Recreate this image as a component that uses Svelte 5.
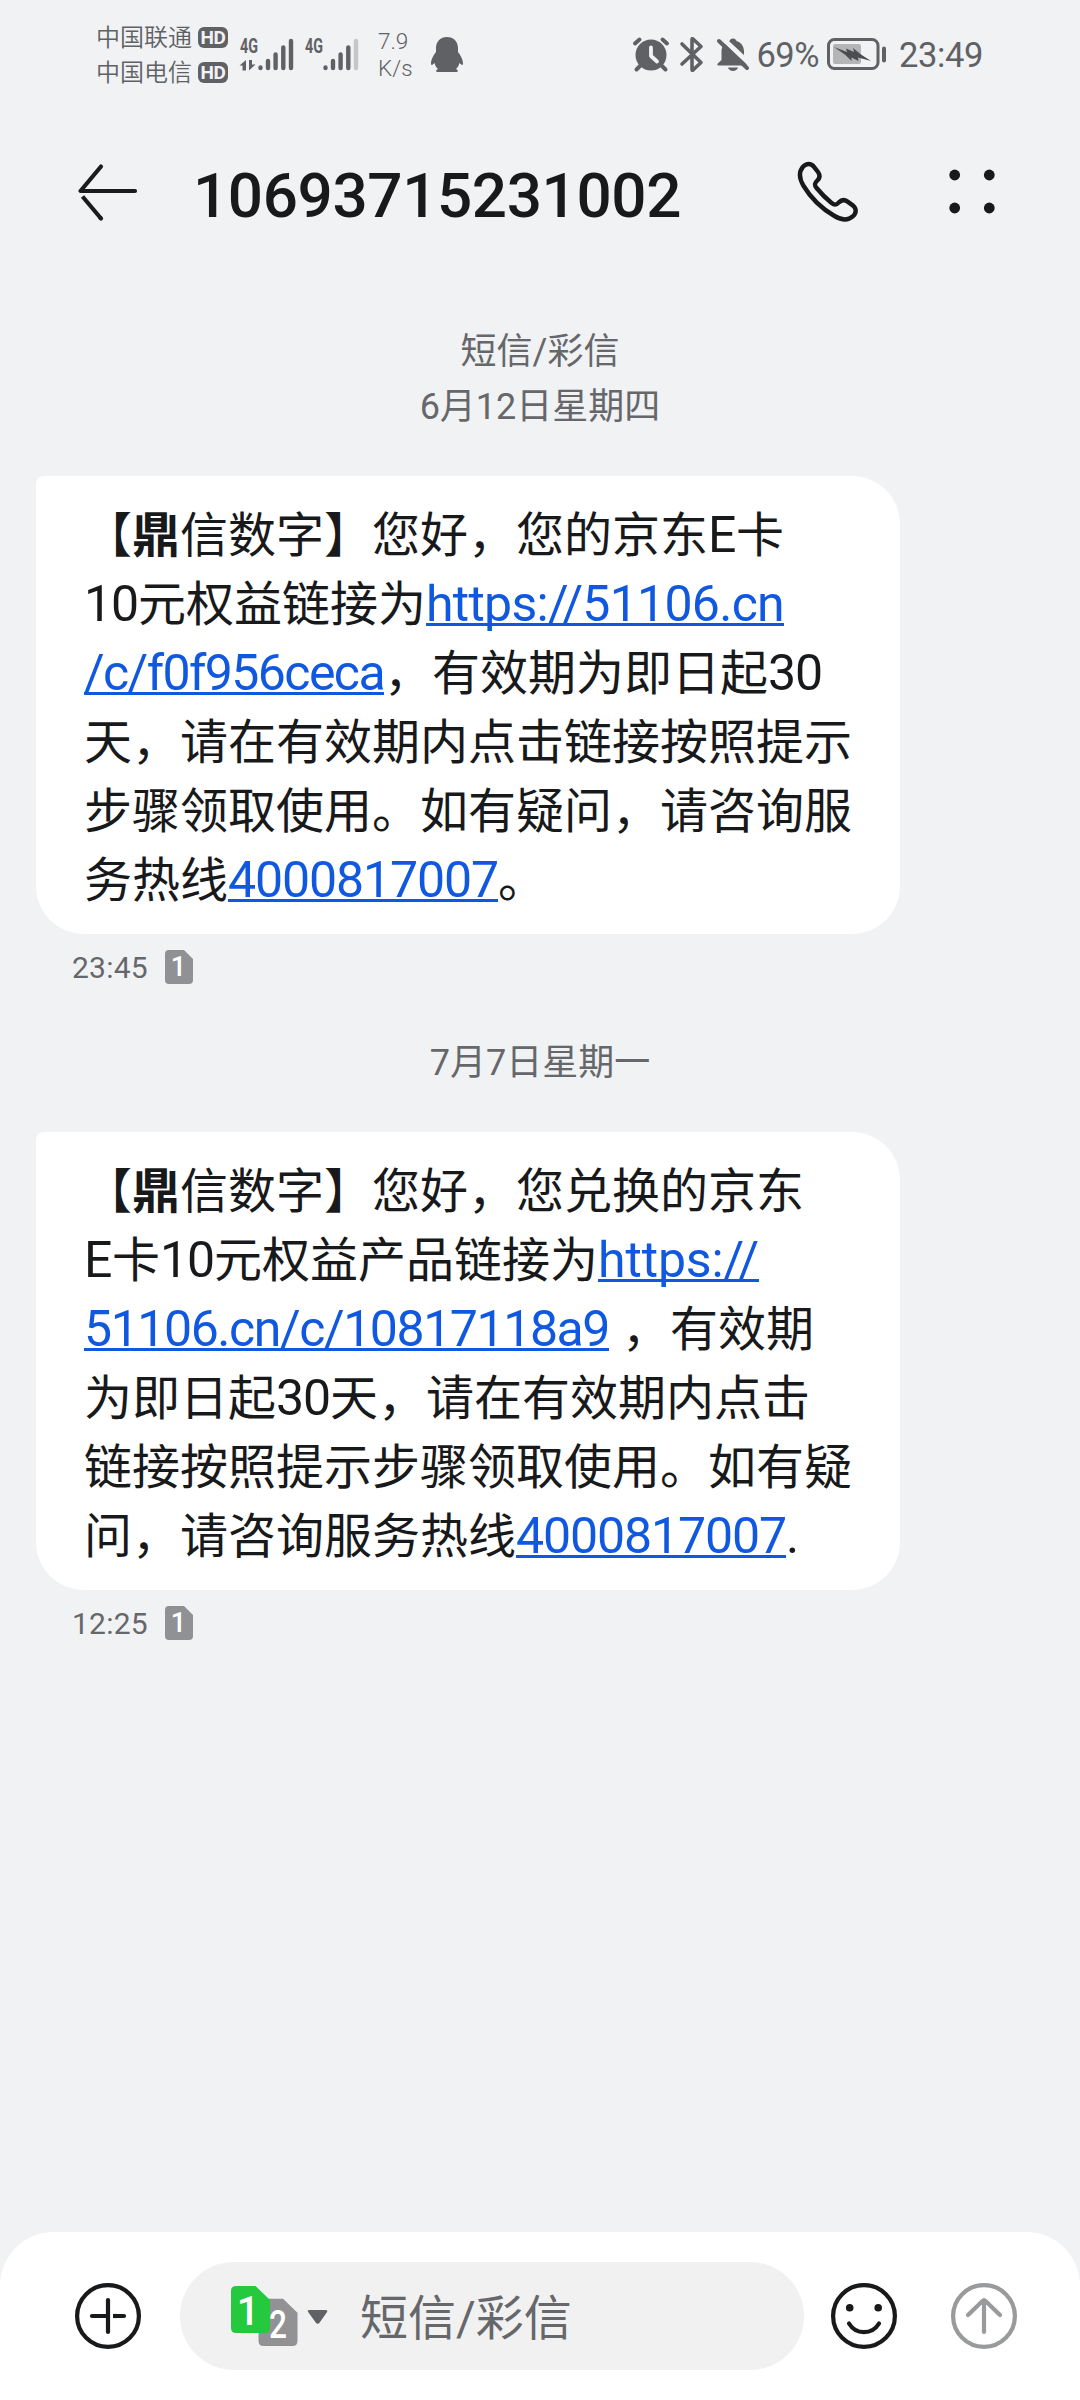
<script>
  const carriers = ['中国联通', '中国电信'];

  // k: 'n' latin run, 'a' link, 'b' bold glyph; w is the advance width of the run
  const messages = [
    {
      date: '6月12日星期四',
      time: '23:45',
      lines: [
        [{ t: '【' }, { t: '鼎', k: 'b' }, { t: '信数字】您好，您的京东' }, { t: 'E', k: 'n', w: 28 }, { t: '卡' }],
        [{ t: '10', k: 'n', w: 54 }, { t: '元权益链接为' }, { t: 'https://51106.cn', k: 'a', w: 358 }],
        [{ t: '/c/f0f956ceca', k: 'a', w: 300 }, { t: '，有效期为即日起' }, { t: '30', k: 'n', w: 54 }],
        [{ t: '天，请在有效期内点击链接按照提示' }],
        [{ t: '步骤领取使用。如有疑问，请咨询服' }],
        [{ t: '务热线' }, { t: '4000817007', k: 'a', w: 270 }, { t: '。' }]
      ]
    },
    {
      date: '7月7日星期一',
      time: '12:25',
      lines: [
        [{ t: '【' }, { t: '鼎', k: 'b' }, { t: '信数字】您好，您兑换的京东' }],
        [{ t: 'E', k: 'n', w: 28 }, { t: '卡' }, { t: '10', k: 'n', w: 54 }, { t: '元权益产品链接为' }, { t: 'https://', k: 'a', w: 161 }],
        [{ t: '51106.cn/c/10817118a9', k: 'a', w: 525 }, { t: ' ', k: 'n', w: 13 }, { t: '，有效期' }],
        [{ t: '为即日起' }, { t: '30', k: 'n', w: 54 }, { t: '天，请在有效期内点击' }],
        [{ t: '链接按照提示步骤领取使用。如有疑' }],
        [{ t: '问，请咨询服务热线' }, { t: '4000817007', k: 'a', w: 270 }, { t: '.', k: 'n', w: 13 }]
      ]
    }
  ];

  // spreads a run over its advance width
  function fit(node, width) {
    const apply = () => {
      node.style.letterSpacing = '0px';
      const natural = node.getBoundingClientRect().width;
      node.style.letterSpacing = (width - natural) / node.textContent.length + 'px';
    };
    apply();
    document.fonts?.ready.then(apply);
  }
</script>

{#snippet run(s)}{#if s.k === 'a'}<a href="#top" use:fit={s.w}>{s.t}</a>{:else if s.k === 'n'}<span class="latin" use:fit={s.w}>{s.t}</span>{:else if s.k === 'b'}<b>{s.t}</b>{:else}{s.t}{/if}{/snippet}

{#snippet signal(full)}
  <svg class="signal" width="54" height="35" viewBox="0 0 54 35">
    <text x="0" y="16" textLength="18" lengthAdjust="spacingAndGlyphs">4G</text>
    {#if full}
      <path d="M6 23v10.500h-3.500v-5h-3zM9 23v10.500l6.500-6h-3.500v-4.500z" fill="#606164" />
    {/if}
    <g stroke="#606164" stroke-width="4.400" stroke-linecap="round">
      <path d="M20.500 30.500v.6M28 24v7M35.600 17.500v13.500M43.300 10.500v20.500" />
      <path d="M51 4v27" stroke={full ? '#606164' : '#c5c6c8'} />
    </g>
  </svg>
{/snippet}

<div class="screen">
  <div class="status">
    <div class="carriers">
      {#each carriers as name}
        <div class="carrier"><span>{name}</span><span class="hd">HD</span></div>
      {/each}
    </div>
    {@render signal(true)}
    {@render signal(false)}
    <div class="speed"><span>7.9</span><span>K/s</span></div>
    <svg class="qq" width="32" height="36" viewBox="0 0 32 36" fill="#606164">
      <path d="M16 0C9.500 0 5 4.600 5 11v4C2.500 18 0 22.500 0 26.500c0 2 1.200 2 3.500-.5.700 2.500 1.800 4.500 3.500 6-2.500 1-2.500 3 0 3h18c2.500 0 2.500-2 0-3 1.700-1.500 2.800-3.500 3.500-6 2.300 2.500 3.500 2.500 3.500.5 0-4-2.500-8.500-5-11.500v-4C27 4.600 22.500 0 16 0z" />
    </svg>

    <svg class="alarm" width="36" height="35" viewBox="0 0 36 35">
      <circle cx="18" cy="18" r="15.500" fill="#606164" />
      <path d="M2 6.500l4.500-4M34 6.500l-4.500-4M7 29l-3.500 3.500M29 29l3.500 3.500" stroke="#606164" stroke-width="4" stroke-linecap="round" />
      <path d="M18 10.500v8.500l6 5.500" fill="none" stroke="#f1f2f4" stroke-width="3.800" stroke-linecap="round" stroke-linejoin="round" />
    </svg>
    <svg class="bt" width="24" height="37" viewBox="0 0 24 37" fill="none" stroke="#606164" stroke-width="3.600" stroke-linecap="round" stroke-linejoin="round">
      <path d="M2 8l19 18.500-8 7.500q-1 .8-1-.5V3.500q0-1.300 1-.5l8 7.500L2 28" />
    </svg>
    <svg class="bell" width="34" height="36" viewBox="0 0 34 36">
      <path d="M17 1.500c1.800 0 3 1 3.500 2.500 5 1.500 7.500 5.500 7.500 10.500v6l3 8H2.500c-1.500 0-1.500-1.500-.5-2.200l3.500-3.300V14.500C5.500 9.500 8.500 5.500 13.500 4 14 2.500 15.200 1.500 17 1.500zM12 30.500h10c-1 4.500-9 4.500-10 0z" fill="#606164" />
      <path d="M3 -2L36 29" stroke="#f1f2f4" stroke-width="5" />
      <path d="M3 4l28 27" stroke="#606164" stroke-width="4" stroke-linecap="round" />
    </svg>
    <span class="percent" use:fit={62.5}>69%</span>
    <svg class="battery" width="60" height="33" viewBox="0 0 60 33">
      <rect x="1.500" y="1.500" width="49.500" height="29" rx="6" fill="none" stroke="#606164" stroke-width="3" />
      <rect x="6" y="6" width="28" height="20" rx="2" fill="#b4b5b7" />
      <path d="M7 9l13 5-1-3.500 8 3.500-1-4 8 6.500L44 23l-13-3.500.500 3.500-7-3.500v3.500l-6-6z" fill="#4c4d50" />
      <path d="M57 10.500v12" stroke="#606164" stroke-width="4" stroke-linecap="round" />
    </svg>
    <span class="clock" use:fit={84}>23:49</span>
  </div>

  <header>
    <svg width="62" height="58" viewBox="0 0 62 58" fill="none" stroke="#1a1b1d" stroke-width="4.200" stroke-linecap="round" stroke-linejoin="round">
      <path d="M25 3.500L4.500 28H59" />
      <path d="M6.500 33.500L25 55.500" stroke-linecap="butt" />
      <path d="M24.500 55l.5.500" />
    </svg>
    <h1><span use:fit={488}>10693715231002</span></h1>
    <svg class="phone" width="60" height="60" viewBox="0 0 60 60" fill="none" stroke="#18191b" stroke-width="4.400" stroke-linejoin="round">
      <path d="M5 4.800C8.500 1 13 1 16 4.800l4 5.200c2.500 3.500 2 6-.8 8.700-3 2.600-2.800 4.600-.6 7.300 4.500 5.500 9.500 10.500 15 15 2.700 2.200 4.700 2.400 7.300-.6 2.700-2.800 5.200-3.300 8.700-.8l5.500 4c3.500 3 3.500 7.500-.3 10.800-5.300 4.700-11 4-18.300-.4C23.500 46.500 12.500 35.500 5.300 23.500 1 16 .5 10 5 4.800z" />
    </svg>
    <svg width="48" height="48" viewBox="0 0 48 48" fill="#18191b">
      <circle cx="6.700" cy="7" r="5.400" />
      <circle cx="41.300" cy="7" r="5.400" />
      <circle cx="6.700" cy="40" r="5.400" />
      <circle cx="41.300" cy="40" r="5.400" />
    </svg>
  </header>

  <main>
    <p class="date">短信/彩信</p>
    {#each messages as m}
      <p class="date">{m.date}</p>
      <div class="bubble">
        {#each m.lines as line}
          <div class="line">{#each line as s}{@render run(s)}{/each}</div>
        {/each}
      </div>
      <div class="meta">
        <span use:fit={76}>{m.time}</span>
        <svg width="28" height="34" viewBox="0 0 28 34">
          <path d="M4 0h15l9 9v21q0 4-4 4H4q-4 0-4-4V4q0-4 4-4z" fill="#909194" />
          <text x="13.500" y="26" text-anchor="middle" font-size="27" fill="#fff">1</text>
        </svg>
      </div>
    {/each}
  </main>

  <footer>
    <svg width="66" height="66" viewBox="0 0 66 66" fill="none" stroke="#18191b" stroke-width="4.200" stroke-linecap="round">
      <circle cx="33" cy="33" r="30.900" />
      <path d="M33 17v32M17 33h16M40 33h9" />
      <path d="M38 33h4" stroke-linecap="butt" />
    </svg>
    <div class="input">
      <svg width="98" height="60" viewBox="0 0 98 60">
        <path d="M32 12.700h20l14.500 14V55q0 5-5 5h-29q-5 0-5-5V17.700q0-5 4.500-5z" fill="#929294" />
        <path d="M5 0h19.500l14.500 14V42q0 5-5 5H5q-5 0-5-5V5q0-5 5-5z" fill="#25c93d" />
        <text x="17" y="39" text-anchor="middle" font-size="40" fill="#fff">1</text>
        <text x="47" y="52" text-anchor="middle" font-size="39" textLength="18" lengthAdjust="spacingAndGlyphs" fill="#fff">2</text>
        <path d="M78.500 24h16q3 0 1.200 2.600l-7 10q-2 2.400-4 0l-7.200-10q-2-2.600 1-2.600z" fill="#606164" />
      </svg>
      <span class="placeholder">短信/彩信</span>
    </div>
    <svg class="smile" width="66" height="66" viewBox="0 0 66 66" fill="none" stroke="#18191b" stroke-width="4.200" stroke-linecap="round">
      <circle cx="33" cy="33" r="30.900" />
      <path d="M18 40.500c7 11.500 23 11.500 30 0" />
      <circle cx="18.700" cy="24.700" r="3.800" fill="#18191b" stroke="none" />
      <circle cx="47.200" cy="24.700" r="3.800" fill="#18191b" stroke="none" />
    </svg>
    <svg width="66" height="66" viewBox="0 0 66 66" fill="none" stroke="#999a9c" stroke-width="4.200" stroke-linecap="round" stroke-linejoin="round">
      <circle cx="33" cy="33" r="30.900" />
      <path d="M33 17v32M17 32l14.500-14q1.500-1.300 3 0L49 32" />
    </svg>
  </footer>
</div>

<style>
  :global(body) {
    background: #f1f2f4;
  }

  .screen {
    display: flex;
    flex-direction: column;
    width: 1080px;
    height: 2400px;
    overflow: hidden;
    background: #f1f2f4;
    color: #18191b;
    font-family: Roboto, 'Noto Sans CJK SC', sans-serif;
  }

  svg {
    display: block;
    flex: none;
    overflow: visible;
  }

  svg text {
    font-family: Roboto, sans-serif;
    font-weight: 500;
  }

  .status {
    display: flex;
    align-items: center;
    height: 109px;
    padding: 0 97px 0 97px;
    color: #606164;
    white-space: nowrap;
  }

  .carriers {
    width: 143px;
  }

  .carrier {
    display: flex;
    align-items: center;
    gap: 6px;
    height: 35px;
    font-size: 24px;
    font-weight: 350;
  }

  .carrier span:first-child {
    line-height: 35px;
    margin: 2px 0 0 -1px;
  }

  .hd {
    width: 30px;
    height: 21px;
    border-radius: 6px;
    background: #606164;
    color: #f1f2f4;
    font-size: 19px;
    font-weight: 700;
    line-height: 22px;
    letter-spacing: -0.5px;
    text-align: center;
  }

  .signal {
    margin-right: 11px;
  }

  .signal text {
    font-size: 21px;
    font-weight: 700;
    fill: #606164;
  }

  .speed {
    display: flex;
    flex-direction: column;
    width: 53px;
    margin-left: 8px;
    font-size: 22.5px;
    font-weight: 350;
    line-height: 27px;
  }

  .alarm {
    margin-left: auto;
  }

  .bt {
    margin-left: 11px;
  }

  .bell {
    margin-left: 12px;
  }

  .percent {
    margin-left: 7px;
    padding-top: 1px;
    font-size: 34.5px;
  }

  .battery {
    margin-left: 8px;
  }

  .clock {
    margin-left: 12px;
    padding-top: 1px;
    font-size: 34.5px;
  }

  header {
    display: flex;
    align-items: center;
    height: 166px;
    padding: 0 84px 0 76px;
    box-sizing: border-box;
  }

  h1 {
    flex: 1;
    margin: 8px 0 0 55px;
    font-size: 62px;
    font-weight: 500;
    line-height: 72px;
    white-space: nowrap;
  }

  .phone {
    margin-right: 90px;
  }

  main {
    flex: 1;
    padding: 50px 36px 0;
  }

  .date {
    margin: 0;
    color: #66676a;
    font-size: 36px;
    line-height: 55px;
    text-align: center;
  }

  .bubble {
    box-sizing: border-box;
    width: 864px;
    height: 458px;
    margin-top: 41px;
    padding: 25px 48px 19px;
    border-radius: 8px 48px 48px 48px;
    background: #fff;
    font-size: 48px;
  }

  .line {
    height: 69px;
    line-height: 69px;
    white-space: pre;
  }

  .line a,
  .latin {
    font-size: 50px;
    line-height: 1;
  }

  .line a {
    color: #1158e0;
    text-decoration: underline;
    text-decoration-thickness: 3px;
    text-underline-offset: 2px;
    text-decoration-skip-ink: none;
  }

  b {
    font-weight: 700;
  }

  .meta {
    display: flex;
    align-items: center;
    gap: 17px;
    height: 34px;
    margin: 16px 0 52px 36px;
    color: #66676a;
    font-size: 30px;
  }

  .meta span {
    padding-top: 1px;
    white-space: nowrap;
  }

  footer {
    display: flex;
    align-items: flex-start;
    height: 168px;
    box-sizing: border-box;
    padding: 30px 63px 0 75px;
    border-radius: 54px 54px 0 0;
    background: #fff;
  }

  footer > svg {
    margin-top: 21px;
  }

  .input {
    display: flex;
    align-items: center;
    box-sizing: border-box;
    width: 624px;
    height: 108px;
    margin: 0 27px 0 39px;
    padding-left: 51px;
    border-radius: 54px;
    background: #f1f1f2;
  }

  .placeholder {
    margin: 5px 0 0 31px;
    color: #66676a;
    font-size: 48px;
    line-height: 70px;
  }

  .smile {
    margin-right: 54px;
  }
</style>
